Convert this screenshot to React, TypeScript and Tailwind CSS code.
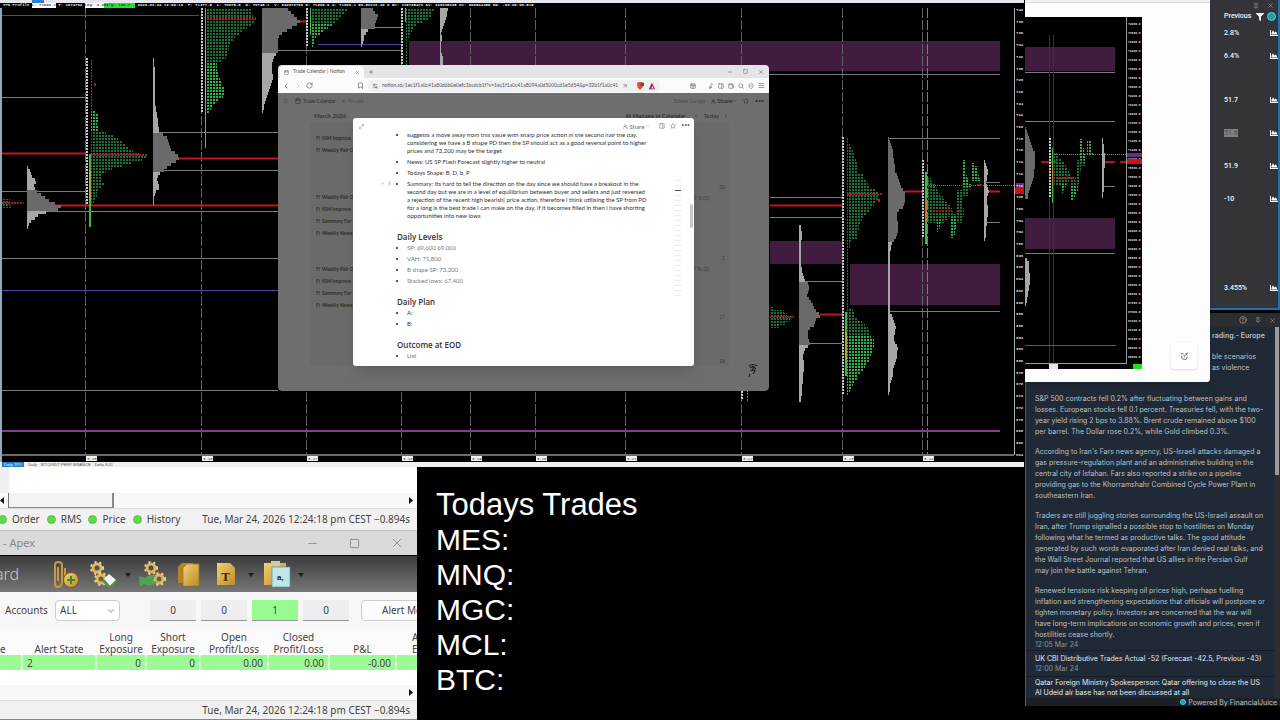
import { type ReactNode } from "react";
import {
  ArrowUpRight,
  Bookmark,
  Calendar,
  CalendarDays,
  ChevronDown,
  ChevronLeft,
  ChevronRight,
  CircleHelp,
  GripVertical,
  Lock,
  Maximize2,
  Menu,
  Minus,
  Music2,
  PanelRight,
  Pin,
  Plus,
  RotateCw,
  Search,
  Settings2,
  ShieldCheck,
  Square,
  Star,
  UserRoundPlus,
  Wallet,
  X,
} from "lucide-react";
import { FaChartArea, FaFilter } from "react-icons/fa";

type Point = [number, number];

// Builds a stepped outline that grows to the right of x, interpolating [y, width] points
function profilePath(x: number, points: Point[], from = -Infinity, to = Infinity, step = 3) {
  const start = points[0][0];
  const end = points[points.length - 1][0];
  let d = "";
  for (let y = start; y < end; y += step) {
    if (y < from || y > to) continue;
    const i = points.findIndex(([py]) => py > y) - 1;
    const [y0, w0] = points[i];
    const [y1, w1] = points[i + 1];
    const jitter = w0 > 5 ? Math.sin(y * 2.3) : 0;
    const w = Math.max(1, Math.round(w0 + ((w1 - w0) * (y - y0)) / (y1 - y0) + jitter));
    d += `M${x} ${y}h${w}v${step}h${-w}z`;
  }
  return d;
}

function Volume({ x, points, area }: { x: number; points: Point[]; area?: Point }) {
  return (
    <g>
      <path d={profilePath(x, points)} fill="#a6a6a6" />
      {area && <path d={profilePath(x, points, area[0], area[1])} fill="#6a6a6a" />}
    </g>
  );
}

function Tpo({ x, points, bright }: { x: number; points: Point[]; bright?: Point }) {
  return (
    <g>
      <path d={profilePath(x, points)} fill="url(#tpo-dim)" />
      {bright && <path d={profilePath(x, points, bright[0], bright[1])} fill="url(#tpo-bright)" />}
    </g>
  );
}

function Dots({ x, y1, y2 }: { x: number; y1: number; y2: number }) {
  return <path d={`M${x} ${y1}V${y2}`} stroke="#c9c9c9" strokeWidth="2" strokeDasharray="2 1" />;
}

function TpoPatterns() {
  return (
    <defs>
      <pattern id="tpo-dim" width="3" height="3" patternUnits="userSpaceOnUse">
        <rect width="2" height="2" fill="#1c7232" />
      </pattern>
      <pattern id="tpo-bright" width="3" height="3" patternUnits="userSpaceOnUse">
        <rect width="3" height="3" fill="#000" />
        <rect width="2" height="2" fill="#2cb444" />
      </pattern>
    </defs>
  );
}

const sessions: [number, string][] = [
  [85, "3-15"],
  [201, "3-16"],
  [306, "3-17"],
  [401, "3-18"],
  [470, "3-19"],
  [535, "3-20"],
  [625, "3-21"],
  [741, "3-22"],
  [842, "3-23"],
  [922, "3-24"],
];

const prices = Array.from({ length: 39 }, (_, i) => 740 - i * 2);
const pricesSmall = Array.from({ length: 38 }, (_, i) => `${74000 - i * 200}.0`);

// [x1, x2, y] of the thin value-area lines
const valueLines = [
  [2, 85, 97],
  [2, 85, 191],
  [27, 278, 211],
  [158, 278, 132],
  [153, 278, 170],
  [262, 401, 50],
  [361, 401, 27],
  [2, 278, 258],
  [2, 278, 390],
  [769, 1000, 74],
  [888, 1000, 311],
  [888, 1000, 138],
  [770, 842, 197],
  [770, 842, 217],
  [800, 842, 281],
  [800, 842, 343],
  [985, 1000, 182],
  [985, 1000, 222],
];

const pocLines = [
  [2, 85, 153],
  [27, 278, 205],
  [153, 278, 158],
  [262, 306, 21],
  [770, 842, 205],
  [905, 923, 191],
  [820, 842, 314],
  [988, 1000, 191],
];

const tpoPocRows = [
  [2, 24, 203],
  [91, 147, 155],
  [207, 256, 18],
  [770, 794, 317],
  [847, 882, 194],
  [933, 951, 211],
  [958, 962, 211],
  [977, 982, 185],
];

function ProfileChart() {
  return (
    <svg
      viewBox="0 8 1024 454"
      preserveAspectRatio="xMinYMin slice"
      className="block h-[454px] w-full bg-black"
      role="img"
      aria-label="TPO profile chart"
    >
      <TpoPatterns />
      <rect x="409" y="41" width="591" height="30" fill="#401c3f" />
      <rect x="770" y="241" width="72" height="23" fill="#401c3f" />
      <rect x="850" y="264" width="150" height="41" fill="#401c3f" />

      {sessions.map(([x]) => (
        <path key={x} d={`M${x + 0.5} 8V456`} stroke="#606060" strokeDasharray="10 2" />
      ))}
      <path d="M927.5 8V456" stroke="#7c7c7c" strokeDasharray="10 2" />

      {valueLines.map(([x1, x2, y]) => (
        <path key={`${x1}-${y}`} d={`M${x1} ${y + 0.5}H${x2}`} stroke="#7b7b7b" />
      ))}
      {pocLines.map(([x1, x2, y]) => (
        <path key={`${x1}-${y}`} d={`M${x1} ${y + 0.5}H${x2}`} stroke="#c4141c" strokeWidth="2" />
      ))}
      <path d="M2 15.5H199M318 44.5H401M2 290.5H278" stroke="#4a46a0" />
      <path d="M2 431H1000" stroke="#883a8c" strokeWidth="2" />
      <path d="M927 185.5H1014" stroke="#777" strokeDasharray="1 1" />

      <Tpo x={2} points={[[199, 9], [208, 8]]} />
      <Volume
        x={27}
        points={[[166, 1], [170, 3], [175, 5], [179, 9], [185, 6], [190, 10], [195, 18], [200, 24], [205, 34], [208, 30], [211, 18], [213, 11], [217, 8], [221, 3], [227, 1]]}
        area={[190, 210]}
      />

      <Dots x={87} y1={58} y2={204} />
      <Tpo
        x={91}
        points={[[59, 2], [108, 2], [112, 6], [128, 8], [134, 22], [140, 30], [148, 40], [155, 56], [158, 52], [162, 38], [167, 20], [172, 10], [178, 10], [183, 15], [188, 8], [200, 3], [204, 1]]}
        bright={[108, 130]}
      />
      <path d="M90 154V170M90 200V227" stroke="#43b64a" strokeWidth="2" />
      <path d="M90 170V200" stroke="#9fae35" strokeWidth="2" />
      <rect x="94" y="83" width="2" height="3" fill="#b3141c" />
      <Volume
        x={153}
        points={[[58, 1], [75, 2], [100, 2], [120, 5], [131, 6], [134, 14], [140, 16], [148, 17], [152, 23], [158, 26], [163, 19], [167, 14], [171, 9], [173, 5], [180, 4], [185, 7], [190, 3], [196, 1], [204, 1]]}
        area={[131, 170]}
      />

      <Dots x={202} y1={8} y2={113} />
      <Tpo
        x={206}
        points={[[8, 46], [12, 44], [18, 50], [25, 42], [35, 30], [45, 22], [58, 20], [60, 12], [72, 12], [80, 14], [87, 18], [94, 19], [99, 12], [104, 6], [112, 1]]}
        bright={[60, 112]}
      />
      <path d="M205.5 8V50M205.5 100V148" stroke="#48c04e" />
      <path d="M205.5 50V100" stroke="#c4c439" />
      <Volume
        x={262}
        points={[[8, 26], [14, 31], [21, 38], [26, 30], [31, 22], [36, 17], [50, 15], [55, 12], [65, 11], [75, 10], [85, 8], [92, 7], [98, 4], [104, 2], [113, 1]]}
        area={[8, 50]}
      />

      <Dots x={307} y1={8} y2={46} />
      <Tpo x={311} points={[[8, 36], [14, 30], [20, 24], [24, 20], [30, 12], [35, 6], [40, 4], [46, 1]]} bright={[23, 46]} />
      <path d="M310.5 8V35" stroke="#48c04e" />
      <Volume x={361} points={[[8, 12], [14, 16], [20, 14], [27, 14], [28, 9], [31, 5], [36, 3], [45, 1]]} area={[8, 27]} />

      <Dots x={402} y1={8} y2={65} />
      <Tpo x={406} points={[[8, 28], [15, 24], [20, 16], [24, 8], [32, 6], [38, 2], [65, 1]]} />
      <path d="M405.5 8V22" stroke="#48c04e" />
      <Volume x={440} points={[[8, 8], [14, 6], [22, 4], [28, 2], [30, 1], [36, 2], [40, 1], [50, 1], [58, 3], [66, 3]]} />

      <Dots x={742} y1={391} y2={400} />
      <Tpo x={746} points={[[390, 2], [400, 2]]} bright={[390, 400]} />
      <Tpo x={770} points={[[307, 4], [310, 14], [314, 18], [317, 24], [320, 20], [323, 14], [328, 3]]} />
      <Volume
        x={799}
        points={[[225, 2], [235, 3], [240, 2], [262, 2], [270, 3], [278, 5], [281, 7], [286, 10], [295, 9], [300, 13], [308, 16], [314, 21], [318, 16], [325, 16], [328, 10], [335, 9], [343, 10], [347, 6], [355, 4], [365, 5], [375, 4], [388, 3], [400, 2]]}
        area={[281, 343]}
      />

      <Dots x={843} y1={137} y2={394} />
      <Tpo
        x={847}
        points={[[137, 1], [145, 4], [153, 8], [160, 10], [171, 10], [172, 14], [180, 20], [186, 24], [190, 33], [196, 32], [200, 28], [205, 24], [212, 20], [220, 14], [230, 10], [237, 10], [239, 4], [250, 2], [305, 2], [306, 7], [311, 8], [316, 9], [320, 14], [327, 21], [333, 22], [338, 28], [344, 27], [350, 25], [356, 22], [362, 20], [368, 18], [374, 12], [380, 7], [386, 4], [394, 1]]}
        bright={[333, 394]}
      />
      <path d="M846 312V332M846 360V376" stroke="#43b64a" strokeWidth="2" />
      <path d="M846 332V360" stroke="#9fae35" strokeWidth="2" />
      <rect x="878" y="199" width="2" height="3" fill="#c4141c" />
      <Volume
        x={888}
        points={[[137, 1], [145, 4], [155, 6], [162, 7], [170, 6], [178, 11], [185, 14], [191, 17], [200, 16], [205, 15], [210, 10], [215, 10], [222, 11], [232, 8], [240, 6], [245, 3], [255, 2], [312, 2], [316, 5], [325, 7], [340, 7], [346, 10], [352, 8], [365, 7], [375, 5], [380, 3], [385, 2], [394, 1]]}
        area={[137, 240]}
      />

      <Dots x={923} y1={160} y2={238} />
      <path d="M926 172V200M926 222V244" stroke="#43b64a" strokeWidth="2" />
      <path d="M926 200V222" stroke="#c07a2a" strokeWidth="2" />
      <Tpo x={928} points={[[178, 3], [186, 8], [192, 12], [196, 16], [200, 18], [206, 22], [211, 24], [215, 20], [219, 17], [223, 12]]} />
      <Tpo x={937} points={[[220, 4], [230, 2]]} bright={[220, 230]} />
      <Tpo x={951} points={[[214, 9], [224, 7], [230, 5], [238, 2]]} bright={[217, 238]} />
      <Tpo x={957} points={[[190, 6], [222, 6]]} />
      <Tpo x={962} points={[[160, 3], [172, 4], [184, 8], [196, 6]]} bright={[160, 184]} />
      <Tpo x={971} points={[[163, 4], [169, 7], [181, 8]]} bright={[163, 181]} />
      <Volume
        x={984}
        points={[[160, 1], [165, 3], [173, 4], [180, 2], [185, 3], [191, 5], [197, 3], [210, 4], [220, 3], [230, 2], [240, 1]]}
      />

      {tpoPocRows.map(([x1, x2, y]) => (
        <path key={`${x1}-${y}`} d={`M${x1} ${y}H${x2}`} stroke="#b3141c" strokeWidth="2" strokeDasharray="2 1" />
      ))}

      <path d="M2 455H1014" stroke="#6b6b6b" strokeWidth="2" />
      <path d="M1014.5 8V455" stroke="#b0b0b0" />
      <path d="M1 8V462" stroke="#8fa9bd" strokeWidth="2" />
      <rect x="1016" y="183" width="8" height="5" fill="#6b2a86" />
      <rect x="1015" y="188" width="9" height="6" fill="#d01018" />
      <g fill="#ddd" fontFamily="Liberation Mono, monospace" fontSize="4" fontWeight="bold">
        {prices.map((price, i) => (
          <text key={price} x="1016" y={11 + Math.round(i * 11.7)}>
            {price}
          </text>
        ))}
      </g>
      {sessions.map(([x, label]) => (
        <g key={label}>
          <rect x={x + 1} y="456" width="11" height="5" fill="#f1f1f1" />
          <text x={x + 2} y="460" fill="#333" fontFamily="Liberation Mono, monospace" fontSize="4">
            {label}
          </text>
        </g>
      ))}
    </svg>
  );
}

function MiniChart() {
  return (
    <svg viewBox="1025 17 117 352" className="mt-[14px] block h-[352px] w-[117px] bg-black" role="img" aria-label="Profile preview">
      <rect x="1025" y="47" width="90" height="24" fill="#401c3f" />
      <rect x="1025" y="218" width="90" height="31" fill="#401c3f" />
      <path d="M1025 72.5H1115M1025 121.5H1115M1025 253.5H1115M1104 186.5H1115" stroke="#7b7b7b" />
      <path d="M1049.5 35V363M1053.5 35V363" stroke="#333" />
      <path d="M1041 162H1056M1105 162H1115M1120 162H1127" stroke="#b3141c" strokeWidth="2" />
      <path d="M1055 154.5H1132" stroke="#8a8a8a" strokeDasharray="1 1" />
      <path d="M1025 345.5H1116" stroke="#883a8c" />
      <Volume
        x={1025}
        points={[[127, 1], [140, 5], [150, 9], [162, 11], [170, 10], [182, 6], [199, 3]]}
        area={[127, 200]}
      />
      <Volume x={1025} points={[[258, 2], [262, 4], [282, 5], [290, 3], [306, 1]]} />
      <Dots x={1050} y1={138} y2={198} />
      <path d="M1052.5 148V203" stroke="#43b64a" />
      <path d="M1052.5 165V185" stroke="#c07a2a" />
      <Tpo x={1054} points={[[153, 3], [160, 8], [168, 14], [177, 19], [184, 12]]} />
      <Tpo x={1061} points={[[184, 5], [191, 2]]} bright={[184, 191]} />
      <Tpo x={1071} points={[[180, 7], [190, 6], [199, 2]]} bright={[184, 199]} />
      <Tpo x={1076} points={[[160, 5], [182, 4]]} />
      <Tpo x={1080} points={[[139, 2], [150, 4], [165, 6]]} bright={[139, 158]} />
      <Tpo x={1087} points={[[141, 4], [154, 6]]} bright={[141, 154]} />
      <path d="M1057 178H1076" stroke="#b3141c" strokeWidth="2" strokeDasharray="2 1" />
      <Volume x={1102} points={[[138, 1], [145, 2], [160, 3], [170, 2], [185, 2], [198, 1]]} />
      <path d="M1126.5 17V363M1025 363.5H1127" stroke="#9a9a9a" />
      <rect x="1127" y="153" width="15" height="4" fill="#6b2a86" />
      <g fill="#ddd" fontFamily="Liberation Mono, monospace" fontSize="3" fontWeight="bold">
        {pricesSmall.map((price, i) => (
          <text key={price} x="1128" y={25 + i * 9}>
            {price}
          </text>
        ))}
      </g>
      <rect x="1127" y="159" width="15" height="5" fill="#d01018" />
      <rect x="1049" y="364" width="9" height="5" fill="#e6e6e6" />
      <rect x="1133" y="364" width="9" height="5" fill="#1be01b" />
    </svg>
  );
}

function ChartHeader() {
  return (
    <header className="bg-black">
      <div className="flex h-[3px] items-stretch bg-[#e6e7ec]">
        <span className="ml-8 w-3 bg-[#2f7fd0]" />
      </div>
      <div className="flex h-[5px] items-center overflow-hidden whitespace-pre pl-[3px] font-['Liberation_Mono',monospace] text-[4px] font-bold leading-[5px] text-gray-200">
        <span>TPO Profile </span>
        <span className="bg-white text-gray-600">L: 71000.1</span>
        <span> T: 1874704 </span>
        <span className="bg-white text-gray-600">Lag: 0.0</span>
        <span className="bg-[#20e52a] text-green-900">OI/g: 134.7  </span>
        <span>
          {" "}2026-03-24 12:00:10  P: 71377.5  L: 70075.5  O: 70745.1  V: 642076796 B: 71000.0 A: 71000.1 50.5Cx33.2K 0 BV: 315745472 AV: 328935295 OV: 600544355 OD: -00:00:00.515
        </span>
      </div>
    </header>
  );
}

const calendarGroups = [
  ["KIM Improve", "Weekly Pair O"],
  ["Weekly Pair O", "KIM Improve", "Summary For", "Weekly News"],
  ["Weekly Pair O", "KIM Improve", "Summary For", "Weekly News"],
];

function CalendarPage() {
  return (
    <div className="flex-1 rounded-b-sm bg-[#6e6e6e] text-[5px] leading-[8px] text-[#2c2c2c]">
      <div className="flex h-4 items-center gap-[2px] px-[5px]">
        <Menu size={6} className="text-[#4d4d4d]" />
        <Calendar size={6} className="ml-1" />
        <span>Trade Calendar</span>
        <Lock size={4} className="ml-1 text-[#4d4d4d]" />
        <span className="text-[#4d4d4d]">Private</span>
        <span className="ml-auto text-[#4d4d4d]">Edited 1w ago</span>
        <button className="ml-1 flex items-center gap-px text-[6px] font-semibold">
          <UserRoundPlus size={5} /> Share <ChevronDown size={4} />
        </button>
        <Star size={6} className="ml-1" />
        <span className="ml-1">•••</span>
      </div>
      <div className="flex h-[14px] items-center pl-9 pr-10 text-[6px]">
        <span className="font-semibold">March 2026</span>
        <button className="ml-auto flex items-center gap-[2px] font-semibold">
          <CalendarDays size={5} /> Manage in Calendar
        </button>
        <ChevronLeft size={6} className="ml-2" />
        <button className="mx-1">Today</button>
        <ChevronRight size={6} />
      </div>
      <div className="ml-8 mr-10 flex justify-between bg-[#6a6a6a] pt-[9px]">
        <div>
          {calendarGroups.map((group, i) => (
            <ul key={i} className={i === 0 ? "h-[59px]" : "h-[72px]"}>
              {group.map((name) => (
                <li key={name} className="flex h-3 items-center gap-[2px] whitespace-nowrap pl-[6px] font-bold">
                  <Calendar size={4} /> {name}
                </li>
              ))}
            </ul>
          ))}
        </div>
        <ul className="pr-1 pt-[51px] text-right text-[#3f3f3f]">
          <li className="h-[11px]">20</li>
          <li className="h-[60px] pr-4">T % (5)</li>
          <li className="h-[11px]">3</li>
          <li className="h-[48px] pr-4">T To (2)</li>
          <li className="h-[44px]">17</li>
          <li>18</li>
        </ul>
      </div>
    </div>
  );
}

function Bullet({ children, muted }: { children: ReactNode; muted?: boolean }) {
  return (
    <li className={muted ? "text-[#777]" : "text-[#333]"}>
      <span>{children}</span>
    </li>
  );
}

function TradeDialog() {
  const listClass =
    "list-disc space-y-[3px] whitespace-pre-line pl-[10px] marker:text-[6px] marker:text-[#222]";
  const headingClass =
    "mt-3 mb-[2px] font-['Open_Sans','Noto_Sans',sans-serif] text-[8px] font-semibold leading-[10px] text-[#333]";

  return (
    <div
      role="dialog"
      aria-label="Daily note"
      className="absolute left-[75px] top-[53px] h-[248px] w-[341px] overflow-hidden rounded-[3px] bg-white text-[#333] shadow-lg"
    >
      <div className="flex h-4 items-center gap-[5px] pl-[6px] pr-1 text-[6px] text-[#666]">
        <Maximize2 size={5} />
        <button className="ml-auto mr-1 flex items-center gap-[2px]">
          <UserRoundPlus size={5} /> Share <ChevronDown size={4} />
        </button>
        <PanelRight size={6} />
        <Star size={6} />
        <span className="text-[5px]">•••</span>
      </div>
      <div className="flex h-[232px] overflow-hidden">
        <div className="flex w-11 justify-end gap-[2px] pr-[5px] pt-[47px] text-[#bbb]">
          <Plus size={5} />
          <GripVertical size={5} />
        </div>
        <div className="-mt-[3px] flex-1 text-[6px] leading-[8px]">
          <ul className={listClass}>
            <Bullet>
              {`suggests a move away from this value with sharp price action in the second half the day,
              considering we have a B shape PD then the SP should act as a good reversal point to higher
              prices and 73,200 may be the target`}
            </Bullet>
            <Bullet>News: US SP Flash Forecast slightly higher to neutral</Bullet>
            <Bullet>Todays Shape: B, D, b, P</Bullet>
            <Bullet>
              {`Summary: Its hard to tell the direction on the day since we should have a breakout in the
              second day but we are in a level of equilibrium between buyer and sellers and just reversed
              a rejection of the recent high bearish| price action, therefore i think utilising the SP from PD
              for a long is the best trade i can make on the day, if it becomes filled in then i have shorting
              opportunities into new lows`}
            </Bullet>
          </ul>
          <h2 className={headingClass}>Daily Levels</h2>
          <ul className={listClass}>
            <Bullet muted>SP: 69,600 69,000</Bullet>
            <Bullet muted>VAH: 71,800</Bullet>
            <Bullet muted>B shape SP: 73,200</Bullet>
            <Bullet muted>Stacked lows: 67,400</Bullet>
          </ul>
          <h2 className={headingClass}>Daily Plan</h2>
          <ul className={listClass}>
            <Bullet>A:</Bullet>
            <Bullet>B:</Bullet>
          </ul>
          <h2 className={headingClass}>Outcome at EOD</h2>
          <ul className={listClass}>
            <Bullet muted>List</Bullet>
          </ul>
        </div>
        <div className="flex w-6 flex-col items-center gap-1 pt-[46px]">
          {Array.from({ length: 24 }, (_, i) => (
            <span key={i} className={i === 2 ? "h-px w-[6px] shrink-0 bg-[#555]" : "h-px w-[6px] shrink-0 bg-[#ebebeb]"} />
          ))}
        </div>
        <div className="w-1 pt-[70px]">
          <div className="h-6 w-[3px] rounded-full bg-[#c8c8c8]" />
        </div>
      </div>
    </div>
  );
}

function BrowserWindow() {
  return (
    <section className="absolute left-[278px] top-[65px] flex h-[326px] w-[491px] flex-col overflow-hidden rounded-sm font-['Lato','Noto_Sans',sans-serif]">
      <div className="flex h-[13px] items-end bg-[#e4e4e7] pl-[2px] text-[5px] text-[#555]">
        <div className="flex h-3 w-[84px] items-center gap-1 rounded-t-sm bg-[#fafafa] px-1">
          <Calendar size={5} />
          <span>Trade Calendar | Notion</span>
          <X size={5} className="ml-auto" />
        </div>
        <Plus size={6} className="mb-[3px] ml-1" />
        <div className="mb-[3px] ml-auto mr-[5px] flex gap-[10px]">
          <Minus size={6} />
          <Square size={5} />
          <X size={6} />
        </div>
      </div>
      <div className="flex h-[15px] items-center gap-1 bg-[#fbfbfb] px-1 text-[#555]">
        <ChevronLeft size={8} />
        <ChevronRight size={8} className="text-[#aaa]" />
        <RotateCw size={7} />
        <Bookmark size={7} className="ml-10" />
        <div className="flex h-3 min-w-0 flex-1 items-center gap-1 rounded-sm bg-[#f0f0f2] px-1">
          <Settings2 size={6} className="shrink-0" />
          <input
            aria-label="Address"
            readOnly
            value="notion.so/1ec1f1a0c41a80d6b0e0efc1bcdcb1f?v=1ec1f1a0c41a8094a0d5000cd1e5d54&p=32b1f1a0c41a8..."
            className="min-w-0 flex-1 text-[5px]"
          />
          <ArrowUpRight size={6} className="shrink-0" />
          <svg viewBox="0 0 10 10" className="ml-1 size-2 shrink-0">
            <path d="M1 2L3 0H7L9 2L8 7L5 10L2 7Z" fill="#e2512a" />
            <circle cx="8" cy="3" r="2.5" fill="#555" />
          </svg>
          <svg viewBox="0 0 10 10" className="size-2 shrink-0">
            <path d="M5 1L9 9H1Z" fill="#b3295d" />
            <path d="M5 5L7 8H3Z" fill="#fff" />
            <path d="M5 1L1 9H5Z" fill="#4c2a86" opacity=".5" />
          </svg>
        </div>
        <div className="ml-[26px] flex items-center gap-[4px]">
          <CalendarDays size={6} />
          <Music2 size={6} className="ml-2" />
          <PanelRight size={6} />
          <Wallet size={6} />
          <Search size={6} />
          <ShieldCheck size={6} />
          <Menu size={7} />
        </div>
      </div>
      <CalendarPage />
      <TradeDialog />
      <svg viewBox="0 0 12 16" className="absolute bottom-3 right-[10px] h-4 w-3" fill="none" stroke="#222" strokeWidth="1.2">
        <path d="M2 3C4 1 8 1 10 3M3 5L6 3L9 6M4 8L6 6L8 8L6 11M3 11L2 14M6 4V8" />
      </svg>
    </section>
  );
}

function StatusLight({ label }: { label: string }) {
  return (
    <span className="flex items-center gap-[5px]">
      <span className="size-[9px] rounded-full border border-[#6fb35f] bg-[#52e23e]" />
      {label}
    </span>
  );
}

function ScrollArrow({ left }: { left?: boolean }) {
  return (
    <svg viewBox="0 0 4 7" className="h-[7px] w-1">
      <path d={left ? "M4 0V7L0 3.5Z" : "M0 0V7L4 3.5Z"} fill="#111" />
    </svg>
  );
}

const timestamp = "Tue, Mar 24, 2026 12:24:18 pm CEST −0.894s";

function ToolbarIcons() {
  return (
    <svg viewBox="50 556 260 36" className="h-9 w-[260px]" role="img" aria-label="Toolbar">
      <defs>
        <linearGradient id="gold" x1="0" y1="0" x2="1" y2="1">
          <stop offset="0" stopColor="#f3d27a" />
          <stop offset="1" stopColor="#bd8a22" />
        </linearGradient>
      </defs>
      <path d="M55 584V565Q55 562 58 562Q62 562 62 565V583Q61 587 58 587Q55 587 55 584M58 567V581M65 584V568" fill="none" stroke="#c79a3f" strokeWidth="2" />
      <circle cx="71" cy="580" r="7.5" fill="url(#gold)" stroke="#7b5a17" />
      <path d="M71 576V584M67 580H75" stroke="#3b8c34" strokeWidth="2" />
      <g fill="none" stroke="#e0b556" strokeWidth="3">
        <circle cx="97" cy="568" r="4" />
        <circle cx="101" cy="579" r="4" />
        <circle cx="151" cy="568" r="4" />
        <circle cx="159" cy="579" r="4" />
      </g>
      <g fill="none" stroke="#f0d48b" strokeWidth="2" strokeDasharray="2 3">
        <circle cx="97" cy="568" r="6" />
        <circle cx="101" cy="579" r="6" />
        <circle cx="151" cy="568" r="6" />
        <circle cx="159" cy="579" r="6" />
      </g>
      <path d="M104 579L109 574L116 580L110 586Z" fill="#f2f2f2" />
      <path d="M104 579L110 586L108 588L102 581ZM110 586L116 580V582L111 587Z" fill="#479a45" />
      <path d="M139 576L145 578Q149 573 156 576L152 580L157 582Q150 588 144 584L140 587Z" fill="#4fa357" />
      <path d="M125 573H131L128 577ZM248 573H254L251 577ZM298 573H304L301 577Z" fill="#1d1d1d" />
      <path d="M182 563H193V583H178V567Z" fill="#b98524" />
      <path d="M187 564H199V586H183V568Z" fill="url(#gold)" stroke="#9b7428" strokeWidth=".7" />
      <path d="M217 563H230L235 568V585H217Z" fill="url(#gold)" />
      <text x="225.5" y="581" textAnchor="middle" fontFamily="Liberation Serif, serif" fontWeight="bold" fontSize="13" fill="#3c2a10">
        T
      </text>
      <rect x="264" y="563" width="22" height="22" fill="url(#gold)" />
      <rect x="271" y="561" width="9" height="5" fill="#cfcab8" />
      <rect x="272" y="567" width="18" height="20" fill="#bfe6e8" stroke="#5d8f94" strokeWidth=".7" />
      <text x="277" y="580" fontFamily="Liberation Sans, sans-serif" fontWeight="bold" fontSize="8" fill="#223">
        a,
      </text>
    </svg>
  );
}

function ApexPanel() {
  const counts = ["0", "0", "1", "0"];
  const cell = "border-r-2 border-[#d5ffd0] px-1";

  return (
    <section className="flex w-[417px] shrink-0 flex-col overflow-hidden bg-white font-['Noto_Sans',sans-serif] text-[10px] text-[#444]">
      <div className="h-[26px] w-[9px] bg-[#efeff1]" />
      <div className="flex h-4 items-center border-b border-[#ddd] bg-[#f8f8f8] pr-1">
        <span className="flex h-full w-[9px] items-center border-r border-[#777]">
          <ScrollArrow left />
        </span>
        <span className="h-full w-[105px] border-b border-r-2 border-[#888] bg-[#f3f3f3]" />
        <span className="ml-auto">
          <ScrollArrow />
        </span>
      </div>
      <div className="flex h-[22px] items-center justify-between border-b border-[#c4c4c4] bg-[#f1f1f1] pr-[7px]">
        <div className="-ml-[2px] flex items-center gap-[7px]">
          <StatusLight label="Order" />
          <StatusLight label="RMS" />
          <StatusLight label="Price" />
          <StatusLight label="History" />
        </div>
        <span>{timestamp}</span>
      </div>
      <div className="flex h-[25px] items-center border-b border-black bg-[#dadada] pl-[3px] pr-[13px] text-[11px] text-[#888]">
        <span>- Apex</span>
        <div className="ml-auto flex items-center gap-[30px]">
          <button aria-label="Minimize">
            <Minus size={13} strokeWidth={1.5} />
          </button>
          <button aria-label="Maximize">
            <Square size={11} strokeWidth={2} />
          </button>
          <button aria-label="Close">
            <X size={14} strokeWidth={1.5} />
          </button>
        </div>
      </div>
      <div className="flex h-9 items-center bg-linear-to-b from-[#3d3d3d] to-[#777]">
        <span className="flex w-[50px] flex-col overflow-hidden">
          <span className="-ml-[5px] text-[16px] font-light leading-5 text-[#c9c9c9]">ard</span>
        </span>
        <ToolbarIcons />
      </div>
      <div className="flex h-9 items-center bg-[#f7f7f7] pl-[5px]">
        <label htmlFor="accounts" className="w-[50px] shrink-0">
          Accounts
        </label>
        <div className="relative shrink-0">
          <select id="accounts" className="h-[21px] w-[65px] appearance-none rounded-sm border border-[#ccc] bg-white pl-1">
            <option>ALL</option>
          </select>
          <ChevronDown size={10} className="absolute right-1 top-[6px] text-[#777]" />
        </div>
        <div className="ml-[30px] flex shrink-0 gap-[5px]">
          {counts.map((count, i) => (
            <span
              key={i}
              className={
                count === "1"
                  ? "h-[21px] w-[46px] border-b border-[#999] bg-[#98fb90] text-center leading-5"
                  : "h-[21px] w-[46px] border-b border-[#999] bg-[#eeeef0] text-center leading-5"
              }
            >
              {count}
            </span>
          ))}
        </div>
        <button className="ml-3 h-[21px] w-20 shrink-0 whitespace-nowrap rounded-sm border border-[#ccc] bg-[#fcfcfc] pl-5 text-left">
          Alert Me
        </button>
      </div>
      <table className="w-[477px] table-fixed border-collapse leading-3">
        <thead>
          <tr className="h-[27px] bg-[#fafafa] text-center align-bottom">
            <th className="w-[22px] text-left font-normal">e</th>
            <th className="w-[74px] font-normal">Alert State</th>
            <th className="w-[50px] font-normal">Long Exposure</th>
            <th className="w-[54px] font-normal">Short Exposure</th>
            <th className="w-[68px] font-normal">Open Profit/Loss</th>
            <th className="w-[61px] font-normal">Closed Profit/Loss</th>
            <th className="w-[67px] font-normal">P&amp;L</th>
            <th className="pl-4 text-left font-normal">
              A<br />E
            </th>
          </tr>
        </thead>
        <tbody>
          <tr className="h-[15px] bg-[#9dfb95] text-right">
            <td className={cell} />
            <td className={`${cell} text-left`}>2</td>
            <td className={cell}>0</td>
            <td className={cell}>0</td>
            <td className={cell}>0.00</td>
            <td className={cell}>0.00</td>
            <td className={cell}>-0.00</td>
            <td className={cell} />
          </tr>
        </tbody>
      </table>
      <div className="mt-[15px] flex h-4 items-center justify-end border-b border-[#ddd] bg-[#f8f8f8] pr-1">
        <ScrollArrow />
      </div>
      <div className="flex flex-1 items-center justify-end border-b border-[#888] bg-[#f1f1f1] pr-[7px]">
        <span>{timestamp}</span>
      </div>
    </section>
  );
}

const trades = ["MES:", "MNQ:", "MGC:", "MCL:", "BTC:"];

function TodaysTrades() {
  return (
    <section className="flex-1 bg-black pl-[19px] pt-5 text-[30px] leading-[35px] text-white">
      <h1 className="text-[31px]">Todays Trades</h1>
      <ul>
        {trades.map((trade) => (
          <li key={trade}>{trade}</li>
        ))}
      </ul>
    </section>
  );
}

const previousValues = [
  { value: "2.8%", height: "h-[23px]" },
  { value: "6.4%", height: "h-11" },
  { value: "51.7", height: "h-[33px]" },
  { value: "51.6", height: "h-[33px]" },
  { value: "51.9", height: "h-[33px]" },
  { value: "-10", height: "h-[89px]" },
  { value: "3.455%", height: "h-[7px]" },
];

function CalendarFeed() {
  return (
    <section className="h-[310px] overflow-hidden border-b-2 border-r-2 border-[#1d73ad] bg-[#343438] pl-[199px] font-['Roboto',sans-serif] text-[7px] font-medium leading-[11px] text-gray-100">
      <div className="flex h-[11px] items-center justify-end gap-2 pr-1 text-[#aaa]">
        <Pin size={6} />
        <X size={7} />
      </div>
      <div className="h-[281px] overflow-hidden">
        <table className="w-full">
          <thead>
            <tr className="h-[17px] align-top">
              <th className="text-left font-medium">Previous</th>
              <th>
                <span className="flex items-center justify-end gap-[3px] pr-[2px] pt-px">
                  <FaFilter size={8} />
                  <span className="size-[9px] rounded-full border border-[#4bd0da] bg-[#2a9aa5]" />
                </span>
              </th>
            </tr>
          </thead>
          <tbody>
            {previousValues.map(({ value, height }) => (
              <tr key={value} className={`${height} align-top`}>
                <td>
                  <span className={value === "51.6" ? "bg-[#808084] text-[#555]" : ""}>{value}</span>
                </td>
                <td>
                  <FaChartArea size={8} className="ml-auto mt-px" />
                </td>
              </tr>
            ))}
          </tbody>
        </table>
      </div>
    </section>
  );
}

const articleParagraphs = [
  `S&P 500 contracts fell 0.2% after fluctuating between gains and
  losses. European stocks fell 0.1 percent. Treasuries fell, with the two-
  year yield rising 2 bps to 3.88%. Brent crude remained above $100
  per barrel. The Dollar rose 0.2%, while Gold climbed 0.3%.`,
  `According to Iran's Fars news agency, US-Israeli attacks damaged a
  gas pressure-regulation plant and an administrative building in the
  central city of Isfahan. Fars also reported a strike on a pipeline
  providing gas to the Khorramshahr Combined Cycle Power Plant in
  southeastern Iran.`,
  `Traders are still juggling stories surrounding the US-Israeli assault on
  Iran, after Trump signalled a possible stop to hostilities on Monday
  following what he termed as productive talks. The good attitude
  generated by such words evaporated after Iran denied real talks, and
  the Wall Street Journal reported that US allies in the Persian Gulf
  may join the battle against Tehran.`,
  `Renewed tensions risk keeping oil prices high, perhaps fuelling
  inflation and strengthening expectations that officials will postpone or
  tighten monetary policy. Investors are concerned that the war will
  have long-term implications on economic growth and prices, even if
  hostilities cease shortly.`,
];

function NewsFeed() {
  return (
    <section className="mt-[3px] border-l border-[#5a524e] bg-[#202a36] font-['Inter',Arial,sans-serif] text-[7px] leading-[11px] text-[#b9c0c9]">
      <div className="flex h-[14px] items-center justify-end gap-2 bg-[#2c2d31] pr-1 text-[#aaa]">
        <CircleHelp size={8} />
        <Pin size={6} />
        <X size={7} />
      </div>
      <div className="flex h-[371px] overflow-hidden">
        <div className="min-w-0 flex-1">
          <article className="pl-[9px]">
            <div className="whitespace-nowrap pl-[177px] pt-[3px]">
              <h2 className="font-semibold">rading.- Europe</h2>
              <p className="pt-[10px]">ble scenarios</p>
              <p className="pb-5">as violence</p>
            </div>
            <div className="space-y-[9px] whitespace-pre-line">
              {articleParagraphs.map((paragraph) => (
                <p key={paragraph}>{paragraph}</p>
              ))}
            </div>
            <time className="block leading-[10px] text-[#8c939d]">12:05 Mar 24</time>
          </article>
          <article className="border-t border-[#161d26] py-[2px] pl-[9px]">
            <h2 className="whitespace-nowrap text-gray-200">
              UK CBI Distributive Trades Actual -52 (Forecast -42.5, Previous -43)
            </h2>
            <time className="block leading-[10px] text-[#8c939d]">12:00 Mar 24</time>
          </article>
          <article className="border-t border-[#161d26] pl-[9px] pt-px">
            <h2 className="whitespace-pre-line leading-[10px] text-gray-200">
              {`Qatar Foreign Ministry Spokesperson: Qatar offering to close the US
              Al Udeid air base has not been discussed at all`}
            </h2>
          </article>
        </div>
        <div className="w-[5px] bg-[#2b2d33]">
          <div className="h-[148px] w-1 bg-[#9a9ba1]" />
        </div>
      </div>
      <footer className="flex h-2 items-center justify-end gap-[2px] bg-[#1d1f27] pr-[3px]">
        <span className="size-[6px] rounded-full border border-[#4bd0da] bg-[#2a9aa5]" />
        Powered By FinancialJuice
      </footer>
    </section>
  );
}

function PreviewWindow() {
  return (
    <section className="absolute left-0 top-0 h-[382px] w-[185px] rounded-br-[3px] bg-[#fdfdfd] shadow-md">
      <div className="h-[3px] border-b border-[#ddd] bg-[#f1f1f3]" />
      <MiniChart />
      <button
        aria-label="Assistant"
        className="absolute bottom-[13px] right-[13px] flex size-[26px] items-center justify-center rounded-[4px] bg-white shadow"
      >
        <svg viewBox="0 0 10 10" className="size-[9px]" fill="none" stroke="#444" strokeWidth=".8">
          <path d="M1 2Q2 1 4 2M6 3L9 1M6 1L8 4M2 4V7Q4 9 7 8L8 5M4 4H6M5 5V6" />
        </svg>
      </button>
    </section>
  );
}

export default function App() {
  return (
    <main className="flex min-h-screen overflow-hidden bg-black font-['Liberation_Sans',Arial,sans-serif]">
      <div className="flex min-w-0 flex-1 flex-col">
        <section className="relative">
          <ChartHeader />
          <ProfileChart />
          <nav className="flex h-[5px] items-center gap-1 overflow-hidden bg-[#f0f0f1] pl-[2px] text-[4px] leading-[5px] text-[#555]">
            <a href="#tpo" className="bg-[#1f7ac4] px-[2px] text-white">
              Daily TPO
            </a>
            <a href="#daily">Daily</a>
            <a href="#footprint">BTCUSDT PERP BINANCE</a>
            <a href="#delta">Delta 8.41</a>
          </nav>
          <BrowserWindow />
        </section>
        <div className="flex flex-1">
          <ApexPanel />
          <TodaysTrades />
        </div>
      </div>
      <aside className="relative ml-px w-[255px] shrink-0">
        <CalendarFeed />
        <NewsFeed />
        <PreviewWindow />
      </aside>
    </main>
  );
}
